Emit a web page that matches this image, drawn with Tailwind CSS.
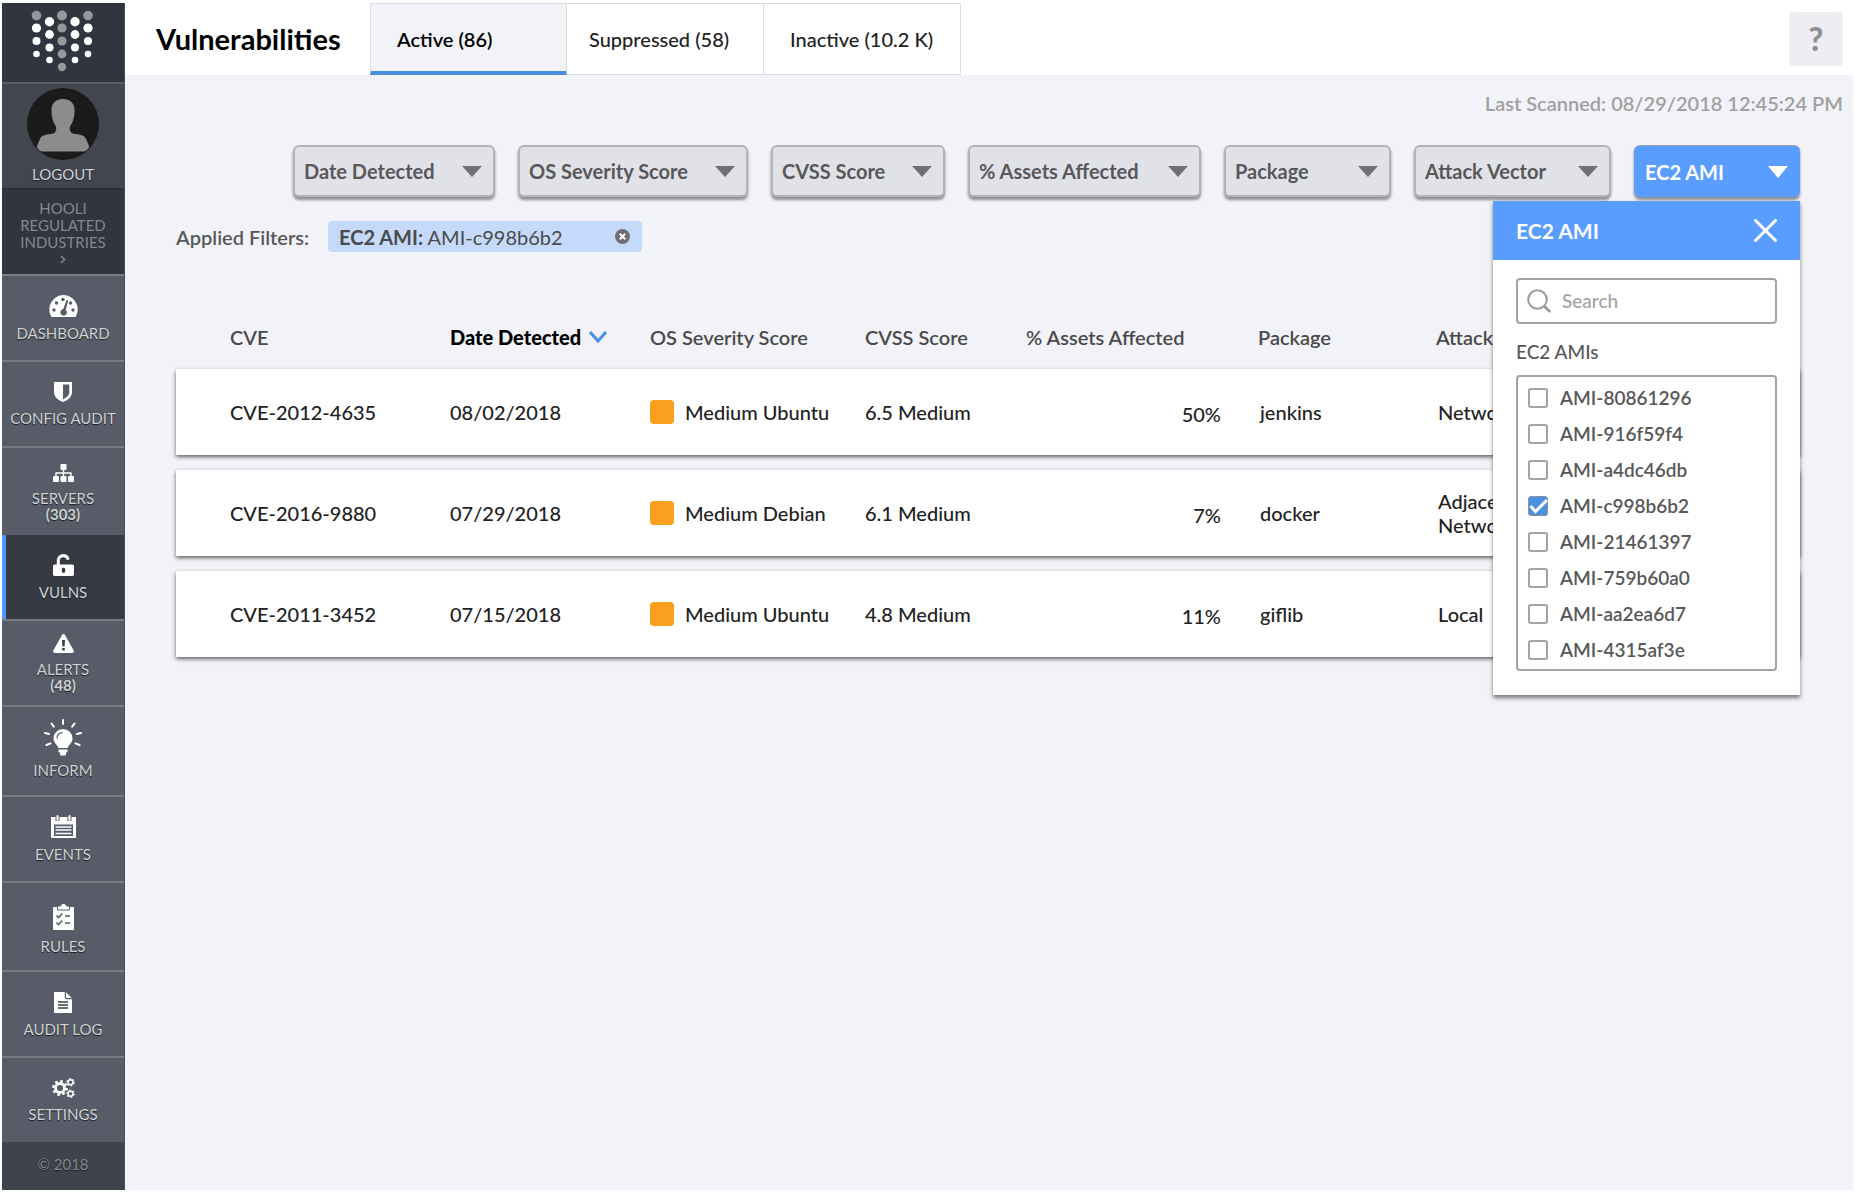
<!DOCTYPE html>
<html lang="en">
<head>
  <meta charset="UTF-8" />
  <meta name="viewport" content="width=device-width, initial-scale=1.0" />
  <title>Vulnerabilities</title>
  <script src="https://cdn.jsdelivr.net/npm/@tailwindcss/browser@4"></script>
</head>
<body class="bg-white font-['Lato','Liberation_Sans',sans-serif] text-[20px] text-[#4a4a4a]">

<div class="flex min-h-screen pt-[3px] pr-[3px] pb-[6px] pl-[2px]">

  <!-- Sidebar -->
  <aside class="flex w-[123px] shrink-0 flex-col border-r border-[#4a4d55] bg-[#31353f] text-center text-[15px] leading-4 text-[#cfd1d4] [text-shadow:0_1px_1px_#1c1e22]">
    <a href="#" aria-label="Home" class="flex h-[79px] justify-center pt-[7px] pr-[2px]">
      <svg class="h-[62px] w-[64px]" viewBox="30 11 64 62" fill="#fff">
        <g fill="#97989b">
          <circle cx="36.5" cy="16.5" r="4.8" /><circle cx="62" cy="16.5" r="5" /><circle cx="88" cy="16.5" r="4.8" />
          <circle cx="62" cy="29" r="4.6" /><circle cx="62" cy="42" r="4.6" /><circle cx="62" cy="55" r="4.4" /><circle cx="62" cy="68" r="4.2" />
        </g>
        <circle cx="36.5" cy="29" r="4.6" /><circle cx="36.5" cy="42" r="4" /><circle cx="36.5" cy="55" r="3.3" />
        <circle cx="88" cy="29" r="4.6" /><circle cx="88" cy="42" r="4" /><circle cx="88" cy="55" r="3.3" />
        <circle cx="49.5" cy="22.7" r="4.7" /><circle cx="49.5" cy="35.5" r="4.4" /><circle cx="49.5" cy="48.5" r="4" /><circle cx="49.5" cy="61" r="3.3" />
        <circle cx="75" cy="22.7" r="4.7" /><circle cx="75" cy="35.5" r="4.4" /><circle cx="75" cy="48.5" r="4" /><circle cx="75" cy="61" r="3.3" />
      </svg>
    </a>
    <a href="#" class="flex h-[106px] flex-col items-center gap-[6px] border-t-2 border-[#5a5e67] bg-[#42464f] pt-1">
      <svg class="size-[72px]" viewBox="0 0 72 72">
        <circle cx="36" cy="36" r="36" fill="#1b1b1b" />
        <path fill="#8c8c8c" d="M36 11c-8 0-12 5-11.500 12 .2 7 1.500 11 4 14.500 1 1.500 1 4 0 6-.6 1.500-2 2.200-5 2.500-7 .7-9.500 2-11 6L10 58c-.4 2 2.500 5 5 5.500h42c2.500-.5 5.400-3.500 5-5.500l-2.500-6c-1.500-4-4-5.300-11-6-3-.3-4.400-1-5-2.500-1-2-1-4.500 0-6 2.500-3.500 3.800-7.500 4-14.500C48 16 44 11 36 11z" />
      </svg>
      LOGOUT
    </a>
    <button type="button" class="flex h-[86px] flex-col items-center justify-center gap-1 border-t border-[#282b32] leading-[17px] text-[#85878b]">
      <span>HOOLI<br />REGULATED<br />INDUSTRIES</span>
      <svg class="h-[9px] w-[6px]" viewBox="0 0 6 9" fill="none" stroke="currentColor" stroke-width="1.500"><path d="M1 1l3.500 3.500L1 8" /></svg>
    </button>

    <nav class="flex grow flex-col bg-[#575c68]">
      <a href="#" class="flex flex-1 flex-col items-center justify-center gap-2 border-t-2 border-[#777b84]">
        <svg class="h-[22px] w-[29px]" viewBox="0 0 29 22">
          <path fill="#fff" d="M14.500 0A14.500 14.500 0 0 0 2 21.300c.2.500.7.700 1.300.7h22.400c.6 0 1.100-.2 1.300-.7A14.500 14.500 0 0 0 14.500 0z" />
          <g fill="#575c68"><circle cx="5" cy="15" r="1.700" /><circle cx="7.500" cy="8" r="1.700" /><circle cx="14" cy="4.500" r="1.700" /><circle cx="21.500" cy="8" r="1.700" /><circle cx="24" cy="15" r="1.700" /><path d="M17.500 5l1.800.6-2.600 9.200a3.300 3.300 0 1 1-2.400-.7z" /></g>
        </svg>
        DASHBOARD
      </a>
      <a href="#" class="flex flex-1 flex-col items-center justify-center gap-2 border-t-2 border-[#777b84]">
        <svg class="h-[20px] w-[18px]" viewBox="0 0 18 20">
          <path fill="#fff" fill-rule="evenodd" d="M1 0h16c.6 0 1 .4 1 1v9c0 5-4.500 8.300-9 10-4.500-1.700-9-5-9-10V1c0-.6.400-1 1-1zm8 2.500v14.700c3-1.400 6.300-3.700 6.300-7.200V2.500z" />
        </svg>
        CONFIG AUDIT
      </a>
      <a href="#" class="flex flex-1 flex-col items-center justify-center gap-2 border-t-2 border-[#777b84] pt-1">
        <svg class="h-[18px] w-[21px]" viewBox="0 0 21 18" fill="#fff">
          <rect x="7.500" y="0" width="6" height="6" rx="1" /><rect x="0" y="12" width="6" height="6" rx="1" /><rect x="7.500" y="12" width="6" height="6" rx="1" /><rect x="15" y="12" width="6" height="6" rx="1" />
          <path d="M9.800 5h1.400v3.300H18c.4 0 .7.300.7.700v4h-1.400V9.700h-6.100V13H9.800V9.700H3.700V13H2.300V9c0-.4.300-.7.700-.7h6.800z" />
        </svg>
        <span>SERVERS<br /><b>(303)</b></span>
      </a>
      <a href="#" aria-current="page" class="flex flex-1 flex-col items-center justify-center gap-2 border-l-4 border-[#4f97fb] bg-[#373a43] pr-1">
        <svg class="h-[22px] w-[21px]" viewBox="0 0 21 22">
          <path fill="none" stroke="#fff" stroke-width="3" stroke-linecap="round" d="M5.300 11V6.300a5 5 0 0 1 9.500-1.800" />
          <path fill="#fff" fill-rule="evenodd" d="M1.800 10.500h17.400c1 0 1.800.8 1.800 1.800v7.900c0 1-.8 1.800-1.800 1.800H1.800c-1 0-1.800-.8-1.800-1.800v-7.900c0-1 .8-1.800 1.800-1.800zm8.700 3.200c-1 0-1.700.7-1.700 1.600v2c0 1 .8 1.700 1.700 1.700s1.700-.7 1.700-1.700v-2c0-.9-.7-1.600-1.700-1.600z" />
        </svg>
        VULNS
      </a>
      <a href="#" class="flex flex-1 flex-col items-center justify-center gap-2 border-t-2 border-[#777b84]">
        <svg class="h-[19px] w-[21px]" viewBox="0 0 21 19">
          <path fill="#fff" d="M12 .9l8.700 15.600c.6 1.100-.2 2.500-1.500 2.500H1.800C.5 19-.3 17.600.3 16.500L9 .9c.7-1.200 2.300-1.200 3 0z" />
          <path fill="#3a3d46" d="M9 6h3l-.4 6.500H9.400zM9.200 14h2.600v2.500H9.200z" />
        </svg>
        <span>ALERTS<br /><b>(48)</b></span>
      </a>
      <a href="#" class="flex flex-1 flex-col items-center justify-center gap-[6px] border-t-2 border-[#777b84] pb-1">
        <svg class="h-[37px] w-[38px]" viewBox="0 0 38 37">
          <path fill="#fff" d="M19 10a9.500 9.500 0 0 0-9.500 9.500c0 4.500 4 6 4.800 9.500h9.400c.8-3.500 4.800-5 4.800-9.500A9.500 9.500 0 0 0 19 10zM14.500 30.500h9v2.200l-1.500 1V35c0 1-.5 1.500-1.500 1.500h-3c-1 0-1.500-.5-1.500-1.500v-1.300l-1.500-1z" />
          <path fill="none" stroke="#575c68" stroke-width="1.200" stroke-linecap="round" d="M13 19c.3-3 2-4.800 5-5.300" />
          <path stroke="#fff" stroke-width="2" stroke-linecap="round" d="M19 1v4M7.500 4.500l2.300 3.200M30.500 4.500l-2.300 3.200M1 14l4 1M37 14l-4 1M2.500 26l4-1.700M35.500 26l-4-1.700" />
        </svg>
        INFORM
      </a>
      <a href="#" class="flex flex-1 flex-col items-center justify-center gap-2 border-t-2 border-[#777b84]">
        <svg class="h-[23px] w-[25px]" viewBox="0 0 25 23">
          <path fill="#fff" fill-rule="evenodd" d="M0 2h25v21H0zM3 9.500h19V21H3z" />
          <path stroke="#fff" stroke-width="1.500" d="M4.500 12h16M4.500 15h16M4.500 18.500h16" />
          <path stroke="#575c68" stroke-width="4" d="M6.500 1v5M18.500 1v5" />
          <path stroke="#fff" stroke-width="2" stroke-linecap="round" d="M6.500 1v4M18.500 1v4" />
        </svg>
        EVENTS
      </a>
      <a href="#" class="flex flex-1 flex-col items-center justify-center gap-2 border-t-2 border-[#777b84] pt-1">
        <svg class="h-[27px] w-[21px]" viewBox="0 0 21 27">
          <path fill="#fff" d="M1 4h19c.6 0 1 .4 1 1v21c0 .6-.4 1-1 1H1c-.6 0-1-.4-1-1V5c0-.6.400-1 1-1z" />
          <path fill="#fff" stroke="#575c68" d="M4.500 3h3C8 1.300 9 .5 10.500.5s2.500.800 3 2.500h3v4h-12z" />
          <path fill="none" stroke="#575c68" stroke-width="1.600" d="M3.500 12.500l2 2 3.800-4M12 13h5M3.500 19.500l2 2 3.800-4M12 20h5" />
        </svg>
        RULES
      </a>
      <a href="#" class="flex flex-1 flex-col items-center justify-center gap-2 border-t-2 border-[#777b84]">
        <svg class="h-[21px] w-[18px]" viewBox="0 0 18 21">
          <path fill="#fff" d="M1 0h9.800v6c0 .6.500 1.200 1.200 1.200h6V20c0 .6-.4 1-1 1H1c-.6 0-1-.4-1-1V1c0-.6.400-1 1-1zM12 .2L17.800 6H12z" />
          <path stroke="#3a3d46" stroke-width="1.600" d="M4 10h10M4 13h10M4 16h10" />
        </svg>
        AUDIT LOG
      </a>
      <a href="#" class="flex flex-1 flex-col items-center justify-center gap-2 border-t-2 border-[#777b84]">
        <svg class="h-[20px] w-[23px]" viewBox="0 0 23 20" fill="none" stroke="#fff">
          <circle cx="8" cy="10" r="4.500" stroke-width="2.800" />
          <circle cx="8" cy="10" r="6.600" stroke-width="2.600" stroke-dasharray="2.600 2.580" />
          <circle cx="18.500" cy="4.300" r="2.500" stroke-width="1.500" />
          <circle cx="18.500" cy="4.300" r="3.500" stroke-width="1.500" stroke-dasharray="1.600 2.060" />
          <circle cx="18.500" cy="15.700" r="2.500" stroke-width="1.500" />
          <circle cx="18.500" cy="15.700" r="3.500" stroke-width="1.500" stroke-dasharray="1.600 2.060" />
        </svg>
        SETTINGS
      </a>
    </nav>
    <footer class="flex h-12 items-center justify-center bg-[#3f434c] pb-1 text-[#85878b]">© 2018</footer>
  </aside>

  <div class="flex min-w-0 grow flex-col">
    <!-- Header -->
    <header class="flex h-[72px] shrink-0 items-center pr-[10px] pl-[31px]">
      <h1 class="w-[214px] text-[29px] font-bold text-black">Vulnerabilities</h1>
      <nav class="flex h-full font-medium text-[#222]">
        <a href="#" aria-current="page" class="flex w-[197px] items-center border border-b-4 border-[#dcdcdf] border-b-[#4a90e2] bg-[#f2f3f8] px-[26px] pt-[3px] font-semibold text-black">Active (86)</a>
        <a href="#" class="flex w-[197px] items-center border-y border-r border-[#dcdcdf] px-[22px]">Suppressed (58)</a>
        <a href="#" class="flex w-[197px] items-center border-y border-r border-[#dcdcdf] px-[26px]">Inactive (10.2 K)</a>
      </nav>
      <button type="button" aria-label="Help" class="ml-auto size-[54px] rounded bg-[#efedf2] text-[32px] font-black text-[#8f8f91]">?</button>
    </header>

    <main class="grow bg-[#f2f3f8] pr-[53px] pl-[51px]">
      <p class="-mr-[43px] pt-4 text-right leading-6 font-semibold text-[#a0a0a0]">Last Scanned: 08/29/2018 12:45:24 PM</p>

      <!-- Filters -->
      <div class="mt-[30px] flex justify-end gap-[23px] font-bold text-[#58585a]">
        <button type="button" class="flex h-[52px] w-[202px] items-center justify-between rounded-md border-2 border-[#b4b4b6] bg-[#e1e2e8] pr-[11px] pl-[9px] shadow-[0_3px_3px_#0000006b]">Date Detected <svg class="h-[11px] w-5" viewBox="0 0 20 11" fill="#707072"><path d="M0 0h20L10 11z" /></svg></button>
        <button type="button" class="flex h-[52px] w-[230px] items-center justify-between rounded-md border-2 border-[#b4b4b6] bg-[#e1e2e8] pr-[11px] pl-[9px] shadow-[0_3px_3px_#0000006b]">OS Severity Score <svg class="h-[11px] w-5" viewBox="0 0 20 11" fill="#707072"><path d="M0 0h20L10 11z" /></svg></button>
        <button type="button" class="flex h-[52px] w-[174px] items-center justify-between rounded-md border-2 border-[#b4b4b6] bg-[#e1e2e8] pr-[11px] pl-[9px] shadow-[0_3px_3px_#0000006b]">CVSS Score <svg class="h-[11px] w-5" viewBox="0 0 20 11" fill="#707072"><path d="M0 0h20L10 11z" /></svg></button>
        <button type="button" class="flex h-[52px] w-[233px] items-center justify-between rounded-md border-2 border-[#b4b4b6] bg-[#e1e2e8] pr-[11px] pl-[9px] shadow-[0_3px_3px_#0000006b]">% Assets Affected <svg class="h-[11px] w-5" viewBox="0 0 20 11" fill="#707072"><path d="M0 0h20L10 11z" /></svg></button>
        <button type="button" class="flex h-[52px] w-[167px] items-center justify-between rounded-md border-2 border-[#b4b4b6] bg-[#e1e2e8] pr-[11px] pl-[9px] shadow-[0_3px_3px_#0000006b]">Package <svg class="h-[11px] w-5" viewBox="0 0 20 11" fill="#707072"><path d="M0 0h20L10 11z" /></svg></button>
        <button type="button" class="flex h-[52px] w-[197px] items-center justify-between rounded-md border-2 border-[#b4b4b6] bg-[#e1e2e8] pr-[11px] pl-[9px] shadow-[0_3px_3px_#0000006b]">Attack Vector <svg class="h-[11px] w-5" viewBox="0 0 20 11" fill="#707072"><path d="M0 0h20L10 11z" /></svg></button>
        <div class="relative">
          <button type="button" id="ami-toggle" aria-expanded="true" aria-controls="ami-panel" class="flex h-[52px] w-[166px] items-center justify-between rounded-md border-t border-[#a0a4ad] bg-[#589dff] pr-3 pl-[11px] text-white shadow-[0_3px_3px_#0000006b]">EC2 AMI <svg class="h-3 w-5" viewBox="0 0 20 12" fill="#fff"><path d="M0 0h20L10 12z" /></svg></button>

          <!-- EC2 AMI dropdown -->
          <section id="ami-panel" aria-label="EC2 AMI" class="absolute top-14 right-0 z-10 w-[307px] bg-white text-[19px] font-semibold shadow-[0_3px_4px_#00000080]">
            <div class="flex h-[59px] items-center justify-between bg-[#589dff] px-[23px] text-[21px] font-bold text-white">
              EC2 AMI
              <button type="button" id="ami-close" aria-label="Close"><svg class="size-[23px]" viewBox="0 0 23 23" stroke="#fff" stroke-width="3" stroke-linecap="round"><path d="M1.500 1.500l20 20M21.500 1.500l-20 20" /></svg></button>
            </div>
            <div class="px-[23px] pt-[18px] pb-6">
              <label class="flex h-[46px] items-center gap-[11px] rounded-sm border-2 border-[#a3a3a3] pl-[9px]">
                <svg class="size-6 shrink-0" viewBox="0 0 24 24" fill="none" stroke="#9b9b9b" stroke-width="2" stroke-linecap="round"><circle cx="10.500" cy="10.500" r="9.300" /><path stroke-width="2.600" d="M17.500 17.500l5 4.800" /></svg>
                <input type="search" aria-label="Search" placeholder="Search" class="w-full min-w-0 font-medium outline-none placeholder:text-[#a3a3a3]" />
              </label>
              <h2 class="pt-4 pb-[11px] leading-6 font-medium">EC2 AMIs</h2>
              <ul class="rounded-sm border-2 border-[#a3a3a3] pt-[3px] pb-px pl-[10px]">
                <li><label class="flex h-9 items-center gap-3"><input type="checkbox" class="size-5 appearance-none rounded-[3px] border-2 border-[#a3a3a3] bg-white" />AMI-80861296</label></li>
                <li><label class="flex h-9 items-center gap-3"><input type="checkbox" class="size-5 appearance-none rounded-[3px] border-2 border-[#a3a3a3] bg-white" />AMI-916f59f4</label></li>
                <li><label class="flex h-9 items-center gap-3"><input type="checkbox" class="size-5 appearance-none rounded-[3px] border-2 border-[#a3a3a3] bg-white" />AMI-a4dc46db</label></li>
                <li><label class="flex h-9 items-center gap-3">
                  <span class="relative flex">
                    <input type="checkbox" checked class="peer size-5 appearance-none rounded-[3px] border border-[#8b9099] bg-white checked:bg-[#4a90e2]" />
                    <svg class="pointer-events-none absolute inset-0 hidden size-5 peer-checked:block" viewBox="0 0 20 20" fill="none" stroke="#fff" stroke-width="3"><path d="M2.500 10l5 5.500L19 4" /></svg>
                  </span>AMI-c998b6b2</label></li>
                <li><label class="flex h-9 items-center gap-3"><input type="checkbox" class="size-5 appearance-none rounded-[3px] border-2 border-[#a3a3a3] bg-white" />AMI-21461397</label></li>
                <li><label class="flex h-9 items-center gap-3"><input type="checkbox" class="size-5 appearance-none rounded-[3px] border-2 border-[#a3a3a3] bg-white" />AMI-759b60a0</label></li>
                <li><label class="flex h-9 items-center gap-3"><input type="checkbox" class="size-5 appearance-none rounded-[3px] border-2 border-[#a3a3a3] bg-white" />AMI-aa2ea6d7</label></li>
                <li><label class="flex h-9 items-center gap-3"><input type="checkbox" class="size-5 appearance-none rounded-[3px] border-2 border-[#a3a3a3] bg-white" />AMI-4315af3e</label></li>
              </ul>
            </div>
          </section>
        </div>
      </div>

      <!-- Applied filters -->
      <div class="mt-6 flex items-center gap-3">
        <span class="w-[140px] font-semibold text-[#58585a]">Applied Filters:</span>
        <div class="flex h-[31px] w-[314px] items-center rounded-sm bg-[#c5dafa] pr-3 pl-[11px]">
          <span><b>EC2 AMI:</b> AMI-c998b6b2</span>
          <button type="button" aria-label="Remove filter" class="ml-auto"><svg class="size-[15px]" viewBox="0 0 15 15"><circle cx="7.500" cy="7.500" r="7.500" fill="#6d6e73" /><path stroke="#fff" stroke-width="2" d="M4.800 4.800l5.400 5.400M10.200 4.800l-5.400 5.400" /></svg></button>
        </div>
      </div>

      <!-- Results -->
      <table class="mt-[53px] w-full table-fixed border-separate border-spacing-x-0 border-spacing-y-[15px] text-left">
        <colgroup>
          <col class="w-[274px]" /><col class="w-[200px]" /><col class="w-[215px]" /><col class="w-[161px]" /><col class="w-[232px]" /><col class="w-[178px]" /><col />
        </colgroup>
        <thead>
          <tr class="h-[34px] [&>th]:font-semibold">
            <th class="pl-[54px]">CVE</th>
            <th aria-sort="descending"><button type="button" class="flex items-center gap-2 font-black text-black">Date Detected <svg class="h-3 w-[18px]" viewBox="0 0 18 12" fill="none" stroke="#4a90e2" stroke-width="3"><path d="M1 1l8 9 8-9" /></svg></button></th>
            <th>OS Severity Score</th>
            <th>CVSS Score</th>
            <th>% Assets Affected</th>
            <th>Package</th>
            <th>Attack Vector</th>
          </tr>
        </thead>
        <tbody class="font-medium text-[#222]">
          <tr class="h-[86px] bg-white shadow-[0_2px_4px_#00000099]">
            <td class="pl-[54px]">CVE-2012-4635</td>
            <td>08/02/2018</td>
            <td><div class="flex items-center gap-[11px]"><span class="size-6 rounded bg-[#faa01e]"></span>Medium Ubuntu</div></td>
            <td>6.5 Medium</td>
            <td class="pt-[3px] pr-[37px] text-right">50%</td>
            <td class="pl-[2px]">jenkins</td>
            <td class="pl-[2px]">Network</td>
          </tr>
          <tr class="h-[86px] bg-white shadow-[0_2px_4px_#00000099]">
            <td class="pl-[54px]">CVE-2016-9880</td>
            <td>07/29/2018</td>
            <td><div class="flex items-center gap-[11px]"><span class="size-6 rounded bg-[#faa01e]"></span>Medium Debian</div></td>
            <td>6.1 Medium</td>
            <td class="pt-[3px] pr-[37px] text-right">7%</td>
            <td class="pl-[2px]">docker</td>
            <td class="pl-[2px] leading-6">Adjacent<br />Network</td>
          </tr>
          <tr class="h-[86px] bg-white shadow-[0_2px_4px_#00000099]">
            <td class="pl-[54px]">CVE-2011-3452</td>
            <td>07/15/2018</td>
            <td><div class="flex items-center gap-[11px]"><span class="size-6 rounded bg-[#faa01e]"></span>Medium Ubuntu</div></td>
            <td>4.8 Medium</td>
            <td class="pt-[3px] pr-[37px] text-right">11%</td>
            <td class="pl-[2px]">giflib</td>
            <td class="pl-[2px]">Local</td>
          </tr>
        </tbody>
      </table>
    </main>
  </div>
</div>

<script>
  const toggle = document.getElementById("ami-toggle");
  const panel = document.getElementById("ami-panel");

  function setPanel(open) {
    panel.hidden = !open;
    toggle.setAttribute("aria-expanded", open);
  }

  toggle.addEventListener("click", () => setPanel(panel.hidden));
  document.getElementById("ami-close").addEventListener("click", () => setPanel(false));
</script>
</body>
</html>
